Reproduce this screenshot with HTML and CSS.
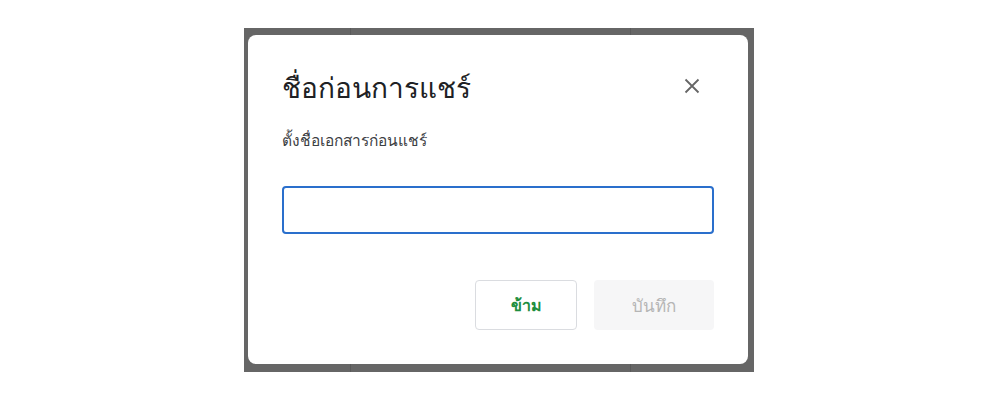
FILE: index.html
```html
<!DOCTYPE html>
<html lang="th">
<head>
<meta charset="utf-8">
<title>ชื่อก่อนการแชร์</title>
<link rel="stylesheet" href="styles.css">
</head>
<body>
<div class="backdrop">
  <div class="grid">
    <span class="vline v1"></span>
    <span class="vline v2"></span>
  </div>
  <div class="dialog" role="dialog" aria-labelledby="dlg-title">
    <div class="header">
      <h1 id="dlg-title" class="title">ชื่อก่อนการแชร์</h1>
      <button class="close" aria-label="ปิด">
        <svg width="16" height="16" viewBox="0 0 16 16"><path d="M1.5 1.5 L14.5 14.5 M14.5 1.5 L1.5 14.5" stroke="#666666" stroke-width="1.8" fill="none"/></svg>
      </button>
    </div>
    <p class="subtitle">ตั้งชื่อเอกสารก่อนแชร์</p>
    <input class="name-input" type="text" aria-label="ชื่อเอกสาร">
    <div class="actions">
      <button class="btn btn-skip">ข้าม</button>
      <button class="btn btn-save" disabled>บันทึก</button>
    </div>
  </div>
</div>
</body>
</html>
```
FILE: styles.css
```css
* { box-sizing: border-box; }
html, body { margin: 0; padding: 0; background: #ffffff; }
body { font-family: "Noto Sans", "Liberation Sans", sans-serif; color: #202124; }

.backdrop {
  position: relative;
  margin: 28px 0 0 244px;
  width: 510px;
  height: 344px;
  padding: 7px 6px 8px 4px;
  background: #666666;
}
.grid { position: absolute; inset: 0; pointer-events: none; }
.vline { position: absolute; top: 0; bottom: 0; width: 1px; background: #5a5a5a; }
.v1 { left: 106px; }
.v2 { left: 386px; }

.dialog {
  position: relative;
  width: 500px;
  height: 329px;
  background: #ffffff;
  border-radius: 8px;
  padding: 32px 34px 34px 34px;
  display: flex;
  flex-direction: column;
}

.header {
  display: flex;
  align-items: center;
  justify-content: space-between;
  height: 40px;
}
.title {
  margin: 0;
  font-size: 28px;
  font-weight: 400;
  line-height: 40px;
  color: #202124;
}
.close {
  width: 40px;
  height: 40px;
  margin-right: 2px;
  margin-top: -2px;
  border: 0;
  background: transparent;
  padding: 0;
  display: flex;
  align-items: center;
  justify-content: center;
}

.subtitle {
  margin: 23px 0 0 0;
  font-size: 15.5px;
  line-height: 20px;
  color: #3c4043;
}

.name-input {
  margin-top: 36px;
  width: 432px;
  height: 48px;
  border: 2px solid #2a6fcc;
  border-radius: 4px;
  outline: none;
  padding: 0 12px;
  font-family: inherit;
  font-size: 16px;
}

.actions {
  margin-top: auto;
  display: flex;
  justify-content: flex-end;
  gap: 17px;
}
.btn {
  height: 50px;
  border-radius: 4px;
  font-family: inherit;
  font-size: 16px;
  padding: 0;
}
.btn-skip {
  width: 102px;
  background: #ffffff;
  border: 1px solid #dadce0;
  color: #1e8e3e;
  font-weight: 700;
}
.btn-save {
  width: 120px;
  background: #f6f6f7;
  border: 0;
  color: #b5b5b5;
  font-size: 17px;
  font-weight: 400;
}
```
